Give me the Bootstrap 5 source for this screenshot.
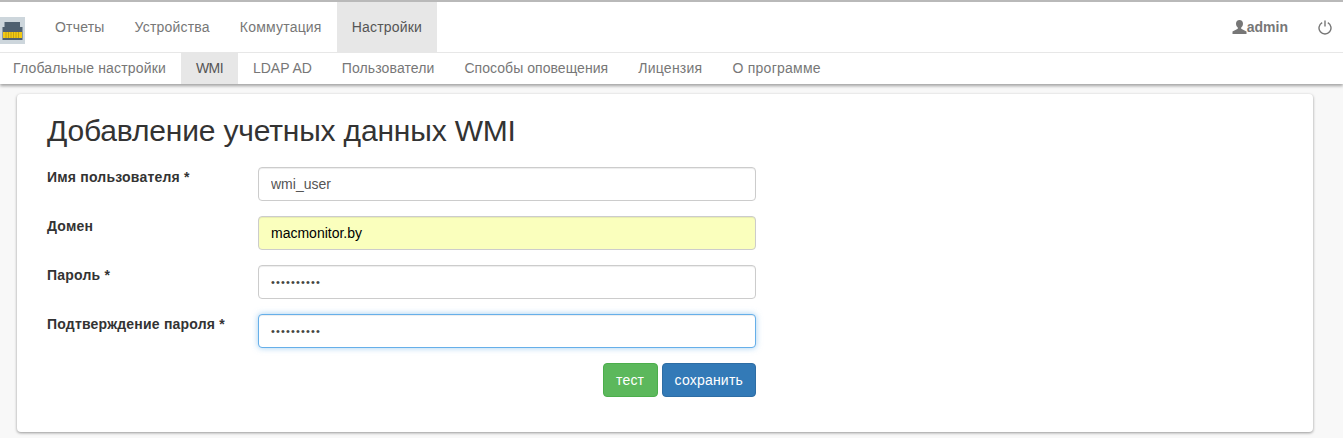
<!DOCTYPE html>
<html lang="ru"><head><meta charset="utf-8"><title>WMI</title>
<link rel="stylesheet" href="https://cdn.jsdelivr.net/npm/bootstrap@5.3.0/dist/css/bootstrap.min.css">
<style>
html,body{height:438px;overflow:hidden}
body{font-family:"Liberation Sans",Arial,sans-serif;font-size:14px;color:#333;background:#f8f8f8}
.topbar{background:#fff;border-top:2px solid #b9b9b9;box-shadow:0 2px 3px rgba(0,0,0,.35);position:relative}
.mainrow{height:51px;border-bottom:1px solid #e7e7e7}
.logo-box{width:25px;height:27px;background:#cdd6dc;margin-top:15px;display:block}
.nav-items{margin-left:15px}
.nav-items a,.subrow a{color:#777;text-decoration:none;display:block}
.nav-items a{padding:0 15px;line-height:50px;height:50px;letter-spacing:.2px}
.nav-items a.on{background:#e7e7e7;color:#555}
.subrow{height:31px}
.subrow a{padding:0 15px;line-height:31px;height:31px;letter-spacing:.1px}
.subrow a.sp-first{padding:0 15px 0 13px;letter-spacing:.17px}
.subrow a.sp-tight{letter-spacing:-.6px}
.subrow a.sp-none{letter-spacing:0}
.subrow a.sp-mid{letter-spacing:.05px}
.subrow a.sp-wide{letter-spacing:.25px}
.subrow a.on{background:#e7e7e7;color:#555}
.user-link{color:#777;font-weight:700;font-size:14px;text-decoration:none;margin-right:30px;display:flex;align-items:center}
.power-ic{margin-right:11px;display:block}
.panel-box{margin:10px 30px 0 17px;height:338px;background:#fff;border-radius:4px;box-shadow:0 1px 3px rgba(0,0,0,.4);padding:0 30px}
.panel-box h1{font-size:30px;font-weight:500;line-height:33px;margin:0;padding:20px 0 20px;color:#333;letter-spacing:-.17px}
.field-row{height:49px;width:709px}
.field-row label{width:211px;font-weight:700;font-size:14px;letter-spacing:.2px;line-height:20px;flex:none}
.field-row .form-control{height:34px;width:498px;font-size:14px;color:#555;border:1px solid #ccc;border-radius:4px;padding:6px 12px;box-shadow:inset 0 1px 1px rgba(0,0,0,.075);font-family:"Liberation Sans",Arial,sans-serif}
.field-row .form-control.filled{background:#faffbd;color:#000}
.field-row .form-control.focused{border-color:#66afe9;box-shadow:inset 0 1px 1px rgba(0,0,0,.075),0 0 6px rgba(102,175,233,.6)}
.field-row .form-control.secret{font-size:11px;letter-spacing:1.15px;color:#444}
.actions{width:709px;gap:4px}
.actions .btn{height:34px;font-size:14px;padding:6px 12px;border-radius:4px;line-height:20px;color:#fff;letter-spacing:.2px}
.btn-test{background:#5cb85c;border:1px solid #4cae4c;min-width:55px}
.btn-save{background:#337ab7;border:1px solid #2e6da4;min-width:94px}
</style></head><body>
<div class="topbar">
<div class="mainrow d-flex justify-content-between">
<div class="d-flex">
<svg class="logo-box" viewBox="0 0 25 27"><path d="M4.500 5H20v5h2.500v13H2.500V10h2z" fill="#4f6070"/><rect x="3" y="15" width="19" height="6" fill="#f2c913"/><path d="M6 15v6M8.500 15v6M11 15v6M13.500 15v6M16 15v6M18.500 15v6" stroke="#b89a14" stroke-width=".8"/></svg>
<nav class="nav-items d-flex"><a href="#">Отчеты</a><a href="#">Устройства</a><a href="#">Коммутация</a><a href="#" class="on">Настройки</a></nav>
</div>
<div class="d-flex align-items-center">
<a href="#" class="user-link"><svg width="15" height="15" viewBox="0 0 15 15" fill="#777"><path d="M7.500 0C5.300 0 4 1.700 4 3.800c0 1.500.7 3 1.800 3.800v1.100L.5 11.500V14h14v-2.500l-5.300-2.800V7.600C10.300 6.800 11 5.300 11 3.800 11 1.700 9.700 0 7.500 0z"/></svg>admin</a>
<svg class="power-ic" width="14" height="15" viewBox="0 0 14 15" fill="none" stroke="#777" stroke-width="1.400"><path d="M4.200 2.700a6 6 0 1 0 5.600 0"/><path d="M7 0.500v6"/></svg>
</div>
</div>
<div class="subrow d-flex"><a href="#" class="sp-first">Глобальные настройки</a><a href="#" class="on sp-tight">WMI</a><a href="#" class="sp-none">LDAP AD</a><a href="#">Пользователи</a><a href="#" class="sp-mid">Способы оповещения</a><a href="#" class="sp-wide">Лицензия</a><a href="#" class="sp-wide">О программе</a></div>
</div>
<div class="panel-box">
<h1>Добавление учетных данных WMI</h1>
<form>
<div class="field-row d-flex"><label>Имя пользователя *</label><input class="form-control" value="wmi_user"></div>
<div class="field-row d-flex"><label>Домен</label><input class="form-control filled" value="macmonitor.by"></div>
<div class="field-row d-flex"><label>Пароль *</label><input class="form-control secret" type="password" value="1234567890"></div>
<div class="field-row d-flex"><label>Подтверждение пароля *</label><input class="form-control secret focused" type="password" value="1234567890"></div>
<div class="actions d-flex justify-content-end"><button type="button" class="btn btn-test">тест</button><button type="button" class="btn btn-save">сохранить</button></div>
</form>
</div>
<script src="https://cdn.jsdelivr.net/npm/bootstrap@5.3.0/dist/js/bootstrap.bundle.min.js"></script>
</body></html>
